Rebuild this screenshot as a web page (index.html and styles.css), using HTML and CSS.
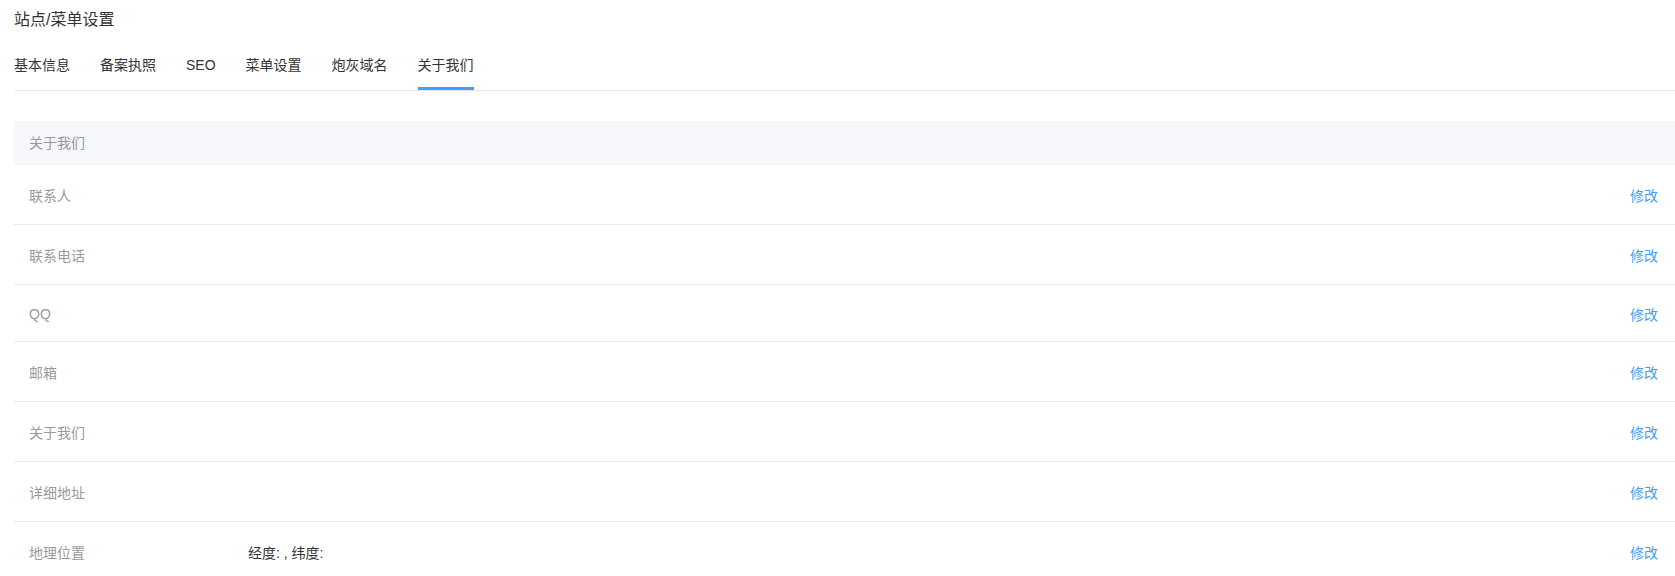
FILE: index.html
```html
<!DOCTYPE html>
<html lang="zh-CN">
<head>
<meta charset="utf-8">
<title>站点/菜单设置</title>
<link rel="stylesheet" href="styles.css">
</head>
<body>
<div class="page">
  <h1 class="page-title">站点/菜单设置</h1>
  <nav class="tabs">
    <span class="tab">基本信息</span>
    <span class="tab">备案执照</span>
    <span class="tab">SEO</span>
    <span class="tab">菜单设置</span>
    <span class="tab">炮灰域名</span>
    <span class="tab tab-active">关于我们</span>
  </nav>
  <section class="panel">
    <div class="panel-head">关于我们</div>
    <div class="row"><span class="label">联系人</span><span class="value"></span><a class="edit">修改</a></div>
    <div class="row"><span class="label">联系电话</span><span class="value"></span><a class="edit">修改</a></div>
    <div class="row row-short"><span class="label">QQ</span><span class="value"></span><a class="edit">修改</a></div>
    <div class="row"><span class="label">邮箱</span><span class="value"></span><a class="edit">修改</a></div>
    <div class="row"><span class="label">关于我们</span><span class="value"></span><a class="edit">修改</a></div>
    <div class="row"><span class="label">详细地址</span><span class="value"></span><a class="edit">修改</a></div>
    <div class="row"><span class="label">地理位置</span><span class="value">经度: , 纬度:</span><a class="edit">修改</a></div>
  </section>
</div>
</body>
</html>
```
FILE: styles.css
```css
html, body {
  margin: 0;
  padding: 0;
  background: #fff;
}
body {
  font-family: "Liberation Sans", "Noto Sans CJK SC", sans-serif;
  font-size: 14px;
  color: #333;
}
.page {
  padding: 9px 0 0 14px;
}
.page-title {
  margin: 0;
  font-size: 16px;
  font-weight: normal;
  line-height: 22px;
  color: #333;
}
.tabs {
  display: flex;
  gap: 30px;
  margin-top: 12px;
  border-bottom: 1px solid #e4e7ed;
}
.tab {
  line-height: 44px;
  border-bottom: 3px solid transparent;
  color: #333;
  white-space: nowrap;
}
.tab-active {
  border-bottom-color: #409eff;
}
.panel {
  margin-top: 30px;
}
.panel-head {
  height: 44px;
  line-height: 44px;
  padding-left: 15px;
  background: #f5f7fa;
  color: #999;
}
.row {
  display: flex;
  align-items: center;
  height: 59px;
  padding: 0 17px 0 15px;
  border-bottom: 1px solid #ebebeb;
}
.row-short {
  height: 56px;
}
.label {
  width: 219px;
  flex: none;
  color: #999;
  padding-top: 1px;
}
.value {
  flex: 1;
  color: #333;
  padding-top: 1px;
}
.edit {
  color: #409eff;
  cursor: pointer;
  padding-top: 1px;
}
```
